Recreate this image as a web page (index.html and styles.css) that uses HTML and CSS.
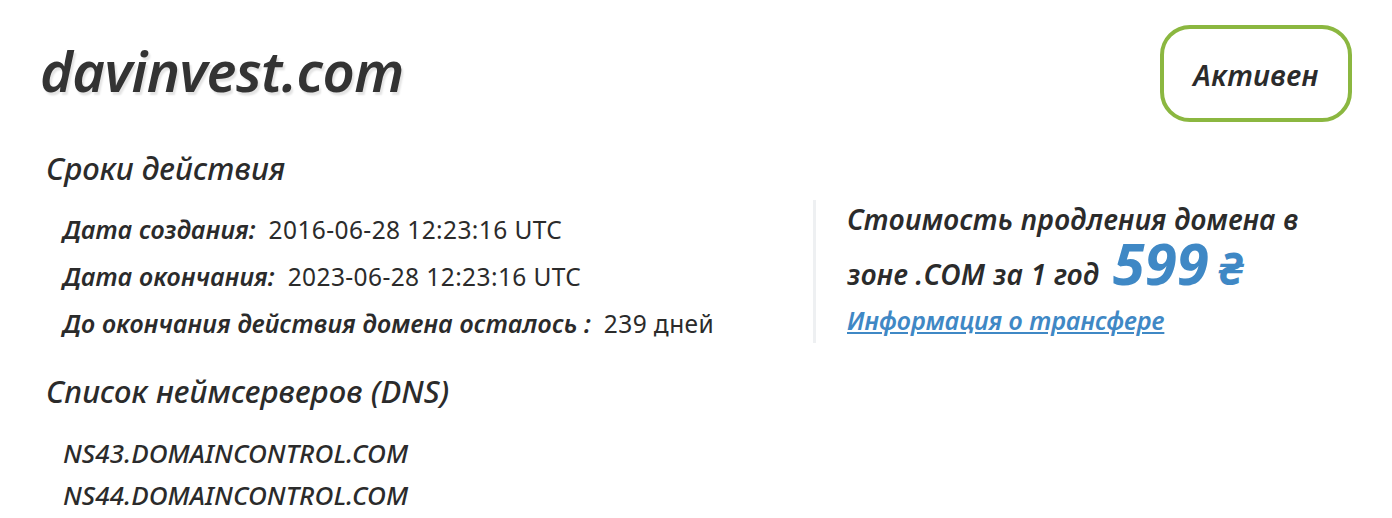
FILE: index.html
```html
<!DOCTYPE html>
<html lang="ru">
<head>
<meta charset="utf-8">
<link rel="stylesheet" href="styles.css">
</head>
<body>
<div class="page">
  <header class="head">
    <h1 class="domain">davinvest.com</h1>
    <div class="status">Активен</div>
  </header>
  <div class="main">
    <div class="left">
      <h2 class="section">Сроки действия</h2>
      <ul class="rows">
        <li><span class="lbl">Дата создания:</span> <span class="val">2016-06-28 12:23:16 UTC</span></li>
        <li><span class="lbl">Дата окончания:</span> <span class="val">2023-06-28 12:23:16 UTC</span></li>
        <li><span class="lbl">До окончания действия домена осталось :</span> <span class="val">239 дней</span></li>
      </ul>
    </div>
    <div class="right">
      <p class="price">Стоимость продления домена в зоне .COM за 1 год <span class="amount">599</span> <span class="cur">₴</span></p>
      <a class="link" href="#">Информация о трансфере</a>
    </div>
  </div>
  <h2 class="section dns-title">Список неймсерверов (DNS)</h2>
  <ul class="ns">
    <li>NS43.DOMAINCONTROL.COM</li>
    <li>NS44.DOMAINCONTROL.COM</li>
  </ul>
</div>
</body>
</html>
```
FILE: styles.css
```css
* { box-sizing: border-box; }
html, body { margin: 0; background: #fff; }
body {
  font-family: "Noto Sans", "Open Sans", sans-serif;
  color: #2b2b2b;
}
.page { padding: 25px 40px 0 40px; }
.head {
  display: flex;
  justify-content: space-between;
  align-items: flex-start;
}
.domain {
  margin: 15px 0 0 0;
  font-size: 56px;
  line-height: 60px;
  font-style: italic;
  font-weight: 600;
  color: #333;
  letter-spacing: -0.6px;
  text-shadow: 2px 3px 2px #e4e4e4;
}
.status {
  width: 192px;
  height: 97px;
  border: 4px solid #8bb740;
  border-radius: 30px;
  display: flex;
  align-items: center;
  justify-content: center;
  font-style: italic;
  font-size: 29px;
  font-weight: 600;
  color: #2b2b2b;
  padding-top: 2px;
  letter-spacing: 0.3px;
}
.main { display: flex; margin-top: 26px; }
.left { width: 773px; }
.section {
  margin: 0 0 0 6px;
  font-size: 31px;
  line-height: 40px;
  font-style: italic;
  font-weight: 500;
  color: #2b2b2b;
  letter-spacing: 0.1px;
}
.rows { list-style: none; margin: 18px 0 0 23px; padding: 0; }
.rows li { font-size: 25px; line-height: 47px; letter-spacing: 0.2px; }
.lbl { font-style: italic; font-weight: 600; }
.val { margin-left: 6px; font-weight: 400; font-size: 24.5px; letter-spacing: 0.4px; }
.right {
  margin-top: 52px;
  border-left: 3px solid #eef0f2;
  padding-left: 31px;
  height: 143px;
  width: 500px;
}
.price {
  margin: -8px 0 0 0;
  font-size: 28px;
  line-height: 55px;
  font-style: italic;
  font-weight: 600;
  color: #2b2b2b;
  letter-spacing: 0.3px;
}
.amount {
  color: #3f88c5;
  font-size: 58px;
  font-weight: 700;
  line-height: 30px;
  margin-left: 6px;
  letter-spacing: 0;
}
.cur {
  color: #3f88c5;
  font-size: 44px;
  font-weight: 700;
  line-height: 30px;
  margin-left: 2px;
}
.link {
  display: block;
  margin-top: 3px;
  color: #3f88c5;
  font-size: 25px;
  line-height: 30px;
  font-style: italic;
  font-weight: 600;
  text-decoration: underline;
}
.dns-title { margin-top: 24px; }
.ns { list-style: none; margin: 21px 0 0 23px; padding: 0; }
.ns li { font-size: 26px; line-height: 42px; font-style: italic; font-weight: 500; letter-spacing: 0.1px; }
```
